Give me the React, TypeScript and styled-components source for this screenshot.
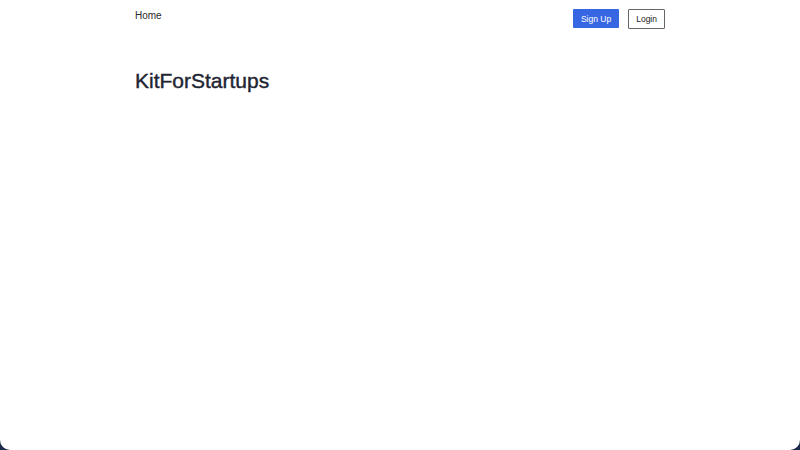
import React from "react";
import styled, { createGlobalStyle } from "styled-components";

const Global = createGlobalStyle`
  html, body { margin: 0; padding: 0; background: #1b2a4c; }
  body { font-family: "Liberation Sans", Arial, Helvetica, sans-serif; }
  * { box-sizing: border-box; }
`;

const Page = styled.div`
  width: 800px;
  height: 450px;
  background: #ffffff;
  border-bottom-left-radius: 10px;
  border-bottom-right-radius: 10px;
  overflow: hidden;
`;

const Container = styled.div`
  width: 530px;
  margin: 0 auto;
  display: flex;
  flex-direction: column;
`;

const Nav = styled.nav`
  display: flex;
  align-items: flex-start;
  justify-content: space-between;
  padding-top: 9px;
`;

const NavLink = styled.a`
  font-size: 10px;
  color: #2a2a2a;
  text-decoration: none;
  line-height: 12px;
  margin-top: 1px;
`;

const Actions = styled.div`
  display: flex;
  gap: 9px;
`;

const Button = styled.button<{ $primary?: boolean }>`
  font-family: "Liberation Sans", Arial, sans-serif;
  font-size: 8.5px;
  height: ${(p) => (p.$primary ? "19px" : "20px")};
  padding: 0 ${(p) => (p.$primary ? "8px" : "7px")};
  border: ${(p) => (p.$primary ? "none" : "1px solid #666")};
  background: ${(p) => (p.$primary ? "#3766e3" : "#ffffff")};
  color: ${(p) => (p.$primary ? "#ffffff" : "#222")};
  border-radius: 1px;
  cursor: pointer;
`;

const Title = styled.h1`
  margin: 40px 0 0;
  font-size: 21px;
  font-weight: 400;
  -webkit-text-stroke: 0.4px #1f2533;
  color: #1f2533;
  line-height: 24px;
`;

export default function App() {
  return (
    <>
      <Global />
      <Page>
        <Container>
          <Nav>
            <NavLink href="#">Home</NavLink>
            <Actions>
              <Button $primary>Sign Up</Button>
              <Button>Login</Button>
            </Actions>
          </Nav>
          <Title>KitForStartups</Title>
        </Container>
      </Page>
    </>
  );
}
